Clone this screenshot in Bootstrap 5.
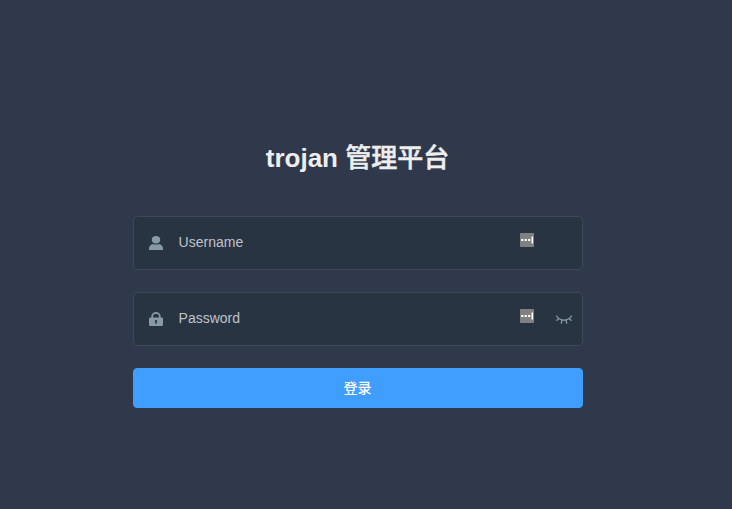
<!DOCTYPE html>
<html lang="zh-CN">
<head>
<meta charset="utf-8">
<meta name="viewport" content="width=device-width, initial-scale=1">
<title>trojan 管理平台</title>
<link href="https://cdn.jsdelivr.net/npm/bootstrap@5.3.0/dist/css/bootstrap.min.css" rel="stylesheet">
<style>
  body { background: #2f394b; font-family: "Liberation Sans", "Noto Sans CJK SC", sans-serif; }
  .login-form { width: 450px; margin-left: 133px; padding-top: 140px; }
  .login-title { font-size: 26px; line-height: 36px; color: #eee; margin-bottom: 40px; padding-right: 1px; }
  .title-cjk { font-weight: 500; -webkit-text-stroke: .5px #eee; }
  .login-field { height: 54px; margin-bottom: 22px; padding-left: 15px; background: #293443; border: 1px solid #3e4957; border-radius: 5px; }
  .login-field svg { flex: none; }
  .login-field .form-control { height: 52px; margin-left: 15.6px; padding: 0 0 2px; font-size: 14px; color: #fff; }
  .login-field .form-control:focus { box-shadow: none; }
  .login-field .form-control::placeholder { color: #bfc3ca; opacity: 1; }
  .field-icon { color: #889aa4; }
  .autofill { margin: 0 22px 7px 0; }
  .eye-slot { width: 26px; }
  .login-btn { height: 40px; padding: 0 1px 1px 0; font-size: 14px; line-height: 1; --bs-btn-bg: #409eff; --bs-btn-border-color: #409eff; --bs-btn-hover-bg: #66b1ff; --bs-btn-hover-border-color: #66b1ff; --bs-btn-border-radius: 4px; }
</style>
</head>
<body class="vh-100 overflow-hidden">
<form class="login-form">
  <h3 class="login-title text-center fw-bold mt-0">trojan <span class="title-cjk">管理平台</span></h3>
  <div class="login-field d-flex align-items-center">
    <svg class="field-icon" width="14" height="14" viewBox="0 0 14 14" fill="currentColor"><ellipse cx="7" cy="3.700" rx="4.200" ry="3.700"/><path d="M0 14v-1.500C0 10.200 1.700 8.600 3.700 8c2 .8 4.600.8 6.600 0 2 .6 3.700 2.200 3.700 4.500V14z"/></svg>
    <input class="form-control border-0 bg-transparent" type="text" placeholder="Username" aria-label="Username">
    <svg class="autofill" width="14" height="14" viewBox="0 0 14 14"><rect width="14" height="14" rx="1" fill="#808080"/><path fill="#fff" d="M1.300 6h2.100v2H1.300zM4.700 6h2.100v2H4.700zM8.100 6h2.100v2H8.100zM11.500 3.500H13v7h-1.500z"/></svg>
    <span class="eye-slot flex-shrink-0"></span>
  </div>
  <div class="login-field d-flex align-items-center">
    <svg class="field-icon" width="14" height="14" viewBox="0 0 14 14"><path d="M3.200 6V4.300a3.800 3.500 0 0 1 7.600 0V6" fill="none" stroke="currentColor" stroke-width="1.700"/><path fill="currentColor" fill-rule="evenodd" d="M1.300 5.500h11.400Q14 5.500 14 6.800v5.900q0 1.300-1.300 1.300H1.300Q0 14 0 12.700V6.800q0-1.300 1.300-1.300zM7 7.900a1.300 1.300 0 0 0-.6 2.400v1.800h1.200v-1.800A1.300 1.300 0 0 0 7 7.900z"/></svg>
    <input class="form-control border-0 bg-transparent" type="password" placeholder="Password" aria-label="Password">
    <svg class="autofill" width="14" height="14" viewBox="0 0 14 14"><rect width="14" height="14" rx="1" fill="#808080"/><path fill="#fff" d="M1.300 6h2.100v2H1.300zM4.700 6h2.100v2H4.700zM8.100 6h2.100v2H8.100zM11.500 3.500H13v7h-1.500z"/></svg>
    <span class="eye-slot d-flex flex-shrink-0"><svg class="field-icon" width="16" height="9" viewBox="0 0 16 9" fill="none" stroke="currentColor" stroke-width="1.300" stroke-linecap="round"><path d="M.6 1C3.800 6.500 12.200 6.500 15.400 1M2.700 3.500.8 5.400M6 5.200l-.7 2.900M10 5.200l.7 2.900M13.300 3.500l1.900 1.900"/></svg></span>
  </div>
  <button class="btn btn-primary login-btn w-100 fw-medium" type="button">登录</button>
</form>
<script src="https://cdn.jsdelivr.net/npm/bootstrap@5.3.0/dist/js/bootstrap.bundle.min.js"></script>
</body>
</html>
